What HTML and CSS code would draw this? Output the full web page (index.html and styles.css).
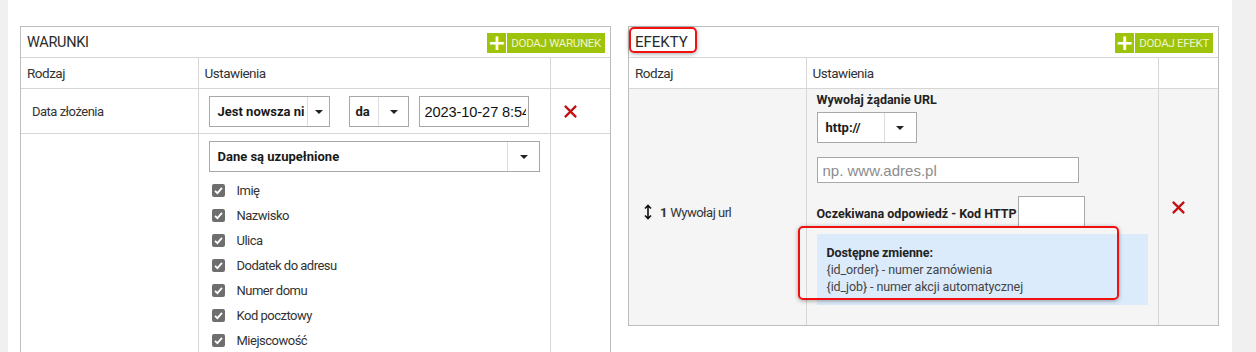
FILE: index.html
```html
<!DOCTYPE html>
<html lang="pl">
<head>
  <meta charset="UTF-8" />
  <title>Automatyzacja</title>
  <link rel="stylesheet" href="styles.css">
</head>
<body>
  <div class="page">
    <div class="panels">

      <!-- warunki -->
      <div class="panel">
        <div class="panel-head">
          <span class="panel-title">WARUNKI</span>
          <button class="add-btn"><span class="plus">+</span><span class="label">DODAJ WARUNEK</span></button>
        </div>
        <table class="grid">
          <colgroup><col class="c1"><col class="c2"><col class="c3"></colgroup>
          <tr class="head-row">
            <td>Rodzaj</td>
            <td>Ustawienia</td>
            <td></td>
          </tr>
          <tr class="row-a">
            <td class="kind">Data złożenia</td>
            <td class="settings">
              <div class="inline">
                <div class="select w-121"><span class="val">Jest nowsza ni</span><span class="arr"></span></div>
                <div class="select w-60"><span class="val">da</span><span class="arr"></span></div>
                <input class="field date" type="text" value="2023-10-27 8:54">
              </div>
            </td>
            <td class="act"><svg class="del" viewBox="0 0 16 16"><path d="M2 2L14 14M14 2L2 14" /></svg></td>
          </tr>
          <tr class="row-b">
            <td></td>
            <td class="settings">
              <div class="select wide"><span class="val">Dane są uzupełnione</span><span class="arr"></span></div>
              <ul class="checks">
                <li><span class="cb"><svg viewBox="0 0 13 13"><path d="M3 6.8L5.4 9.2L10 3.8" /></svg></span>Imię</li>
                <li><span class="cb"><svg viewBox="0 0 13 13"><path d="M3 6.8L5.4 9.2L10 3.8" /></svg></span>Nazwisko</li>
                <li><span class="cb"><svg viewBox="0 0 13 13"><path d="M3 6.8L5.4 9.2L10 3.8" /></svg></span>Ulica</li>
                <li><span class="cb"><svg viewBox="0 0 13 13"><path d="M3 6.8L5.4 9.2L10 3.8" /></svg></span>Dodatek do adresu</li>
                <li><span class="cb"><svg viewBox="0 0 13 13"><path d="M3 6.8L5.4 9.2L10 3.8" /></svg></span>Numer domu</li>
                <li><span class="cb"><svg viewBox="0 0 13 13"><path d="M3 6.8L5.4 9.2L10 3.8" /></svg></span>Kod pocztowy</li>
                <li><span class="cb"><svg viewBox="0 0 13 13"><path d="M3 6.8L5.4 9.2L10 3.8" /></svg></span>Miejscowość</li>
              </ul>
            </td>
            <td></td>
          </tr>
        </table>
      </div>

      <!-- efekty -->
      <div class="panel short">
        <div class="panel-head">
          <span class="panel-title big">EFEKTY</span>
          <button class="add-btn"><span class="plus">+</span><span class="label">DODAJ EFEKT</span></button>
        </div>
        <table class="grid">
          <colgroup><col class="c1"><col class="c2"><col class="c3"></colgroup>
          <tr class="head-row">
            <td>Rodzaj</td>
            <td>Ustawienia</td>
            <td></td>
          </tr>
          <tr class="row-fx">
            <td class="kind fx">
              <svg class="move" viewBox="0 0 8 16"><path d="M4 1.5V14.5M1 4.5L4 1.5L7 4.5M1 11.5L4 14.5L7 11.5" /></svg><b>1</b> Wywołaj url
            </td>
            <td class="settings fx-set">
              <div class="set-title">Wywołaj żądanie URL</div>
              <div class="select w-100"><span class="val">http://</span><span class="arr"></span></div>
              <input class="field url" type="text" placeholder="np. www.adres.pl">
              <div class="code-row">
                <span class="set-title">Oczekiwana odpowiedź - Kod HTTP</span>
                <input class="field code" type="text">
              </div>
              <div class="vars">
                <div class="vars-title">Dostępne zmienne:</div>
                <div>{id_order} - numer zamówienia</div>
                <div>{id_job} - numer akcji automatycznej</div>
              </div>
            </td>
            <td class="act"><svg class="del" viewBox="0 0 16 16"><path d="M2 2L14 14M14 2L2 14" /></svg></td>
          </tr>
        </table>
        <div class="mark mark-title"></div>
        <div class="mark mark-vars"></div>
      </div>

    </div>
  </div>
</body>
</html>
```

FILE: styles.css
```css
:root {
  --line: #d6d6d6;
  --edge: #bdbdbd;
  --green: #9dc30b;
  --text: #333;
  --red: #c41010;
}

body {
  margin: 0;
  background: #f0f0f0;
  font-family: "Roboto", sans-serif;
  color: var(--text);
}

.page {
  background: #fff;
  margin: 0 24px 0 8px;
  padding: 26px 13px 0 12px;
  height: 326px;
  overflow: hidden;
}

.panels {
  display: flex;
  gap: 17px;
  align-items: flex-start;
}

.panel {
  position: relative;
  width: 590px;
  border: 1px solid var(--edge);
  background: #fff;
}

.panel-head {
  height: 30px;
  display: flex;
  align-items: center;
  justify-content: space-between;
  padding: 0 5px 0 6px;
}

.panel-title {
  font-size: 14.5px;
  letter-spacing: -0.3px;
  color: #2a2a2a;
}
.panel-title.big { font-size: 15px; letter-spacing: 0; }

.add-btn {
  display: flex;
  height: 20px;
  padding: 0;
  border: none;
  background: none;
  gap: 1px;
  cursor: pointer;
  margin-top: 1px;
}

.add-btn .plus {
  width: 19px;
  background: var(--green);
  color: #fff;
  font-family: "DejaVu Sans", sans-serif;
  font-size: 22px;
  line-height: 19px;
  font-weight: bold;
}

.add-btn .label {
  background: var(--green);
  color: #eef5cf;
  font-family: "Roboto", sans-serif;
  font-size: 11.5px;
  line-height: 20px;
  padding: 0 4px;
  letter-spacing: -0.3px;
}

.grid {
  width: 100%;
  border-collapse: collapse;
  table-layout: fixed;
}
.c1 { width: 177px; }
.c2 { width: 352px; }

.grid td {
  border-top: 1px solid var(--line);
  border-left: 1px solid var(--line);
  padding: 0;
  font-size: 13px;
  letter-spacing: -0.5px;
}
.grid td:first-child { border-left: none; }

.head-row td {
  height: 30px;
  padding-left: 6px;
  font-size: 13.5px;
}

.kind { padding-left: 11px !important; }

.settings { padding: 7px 10px 6px 10px !important; vertical-align: top; letter-spacing: 0 !important; }

.inline {
  display: flex;
  gap: 19px;
}
.inline .field { margin-left: -9px; }

.select {
  display: flex;
  height: 29px;
  border: 1px solid #a8a8a8;
  background: #fff;
  font-family: "Roboto", sans-serif;
  font-weight: bold;
  font-size: 13px;
  color: #1a1a1a;
}
.select .val {
  flex: 1;
  padding-left: 8px;
  line-height: 29px;
  overflow: hidden;
  white-space: nowrap;
}
.select .arr {
  width: 31px;
  border-left: 1px solid #ddd;
  position: relative;
}
.select .arr::after {
  content: "";
  position: absolute;
  left: 11px;
  top: 13px;
  border-left: 4px solid transparent;
  border-right: 4px solid transparent;
  border-top: 4px solid #222;
}
.w-121 { width: 119px; }
.w-121 .arr { flex: 0 0 21px; width: 21px; }
.w-121 .arr::after { left: 7px; }
.w-60 { width: 58px; }
.w-60 .val { padding-left: 6px; }
.w-60 .arr { flex: 0 0 29px; }
.w-60 .arr::after { left: 11px; }
.w-100 { width: 98px; margin-top: 4px; }
.w-100 .arr { flex: 0 0 31px; }
.wide { width: 329px; }
.wide .arr { flex: 0 0 31px; }
.wide .arr::after { left: 12px; }

.field {
  box-sizing: border-box;
  border: 1px solid #a8a8a8;
  font-family: "Liberation Sans", Arial, sans-serif;
  font-size: 15px;
  color: #111;
  padding: 0 5px;
  outline: none;
  background: #fff;
}
.field::placeholder { color: #8c8c8c; }
.date { width: 110px; height: 31px; padding: 0 2px 0 5px; font-size: 14.6px; letter-spacing: -0.1px; }

.checks {
  list-style: none;
  margin: 6px 0 0 0;
  padding: 0 0 0 3px;
}
.checks li {
  height: 25px;
  display: flex;
  align-items: center;
  font-size: 13px;
  letter-spacing: -0.5px;
  color: #333;
}
.cb {
  width: 13px;
  height: 13px;
  border-radius: 2px;
  background: #6e6e6e;
  margin-right: 12px;
  display: inline-block;
}
.cb svg { width: 13px; height: 13px; display: block; }
.cb path { fill: none; stroke: #fff; stroke-width: 1.8; }

.act { vertical-align: middle; padding-left: 12px !important; }
.del { width: 15px; height: 15px; display: block; }
.del path { stroke: var(--red); stroke-width: 2.4; fill: none; }

.row-fx td { background: #f5f5f5; }
.kind.fx { padding-left: 15px !important; vertical-align: middle; padding-top: 9px !important; }
.move { width: 8px; height: 16px; vertical-align: -3px; margin-right: 8px; }
.move path { stroke: #111; stroke-width: 1.6; fill: none; }
.kind.fx b { font-size: 13px; letter-spacing: 0; }

.fx-set { padding: 2px 10px 20px 10px !important; }
.set-title {
  font-family: "Roboto", sans-serif;
  font-weight: bold;
  font-size: 12.5px;
  color: #222;
  line-height: 17px;
}
.url { display: block; width: 262px; height: 26px; margin-top: 14px; }
.code-row {
  display: flex;
  align-items: flex-end;
  gap: 1px;
  margin-top: 13px;
}
.code-row .set-title { padding-bottom: 5px; }
.code { width: 67px; height: 31px; }

.vars {
  margin-top: 7px;
  width: 311px;
  background: #dcebfb;
  padding: 10px;
  font-family: "Roboto", sans-serif;
  font-size: 12.5px;
  letter-spacing: -0.1px;
  line-height: 17px;
  color: #444;
}
.vars-title { font-weight: bold; color: #222; }

/* red annotation frames */
.mark {
  position: absolute;
  border: 2px solid #f01010;
  border-radius: 5px;
  box-shadow: 0 1px 4px rgba(0, 0, 0, 0.35);
}
.mark-title { left: 0; top: 0; width: 64px; height: 22px; }
.mark-vars { left: 169px; top: 199px; width: 317px; height: 70px; }
```
